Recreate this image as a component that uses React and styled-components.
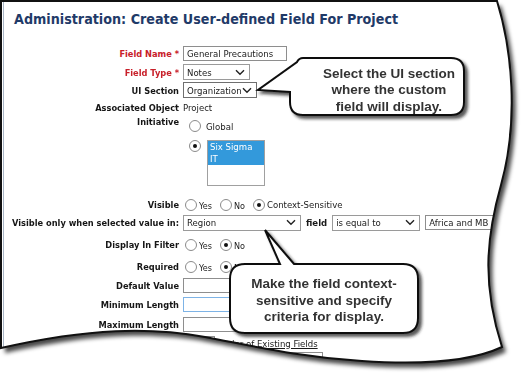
import React from "react";
import styled, { createGlobalStyle } from "styled-components";

const PAPER =
  "M1,1 L497,1 C512,50 519,120 501,185 C486,238 482,285 502,347 C470,362 420,365 362,361 C300,357 258,347 205,337 C150,327 90,328 1,348 Z";

const GlobalStyle = createGlobalStyle`
  html, body { margin: 0; padding: 0; background: #fff; }
  body { width: 530px; height: 381px; overflow: hidden; }
`;

const Chevron = () => (
  <svg width="10" height="7" viewBox="0 0 10 7">
    <polyline points="1,1.2 5,5.2 9,1.2" fill="none" stroke="#222" strokeWidth="1.4" />
  </svg>
);

const Radio = ({ checked }) => <RadioDot $checked={checked} />;

const Callout = ({ id, shape, box, children, ...pos }) => (
  <CalloutWrap style={pos}>
    <CalloutShape width={pos.width + 8} height={pos.height + 8}>
      <defs>
        <filter id={id} x="-10%" y="-10%" width="130%" height="140%">
          <feDropShadow dx="3" dy="3" stdDeviation="1.4" floodColor="#222" floodOpacity="0.75" />
        </filter>
      </defs>
      <path d={shape} fill="#fff" stroke="#111" strokeWidth="2" filter={`url(#${id})`} />
    </CalloutShape>
    <CalloutText $box={box}>{children}</CalloutText>
  </CalloutWrap>
);

export default function App() {
  return (
    <>
      <GlobalStyle />
      <Stage>
        <PaperShadow>
          <Paper>
            <Inner>
              <Title>Administration: Create User-defined Field For Project</Title>
              <Form>
                <Row $h={19}>
                  <Label $red>Field Name *</Label>
                  <Field>
                    <Input $w={104}>General Precautions</Input>
                  </Field>
                </Row>
                <Row $h={18}>
                  <Label $red>Field Type *</Label>
                  <Field>
                    <Select $w={67}>
                      Notes
                      <Chevron />
                    </Select>
                  </Field>
                </Row>
                <Row $h={18}>
                  <Label>UI Section</Label>
                  <Field>
                    <Select $w={74} $dark>
                      Organization
                      <Chevron />
                    </Select>
                  </Field>
                </Row>
                <Row $h={16}>
                  <Label>Associated Object</Label>
                  <Field>
                    <Plain>Project</Plain>
                  </Field>
                </Row>
                <Row $h={81} $top>
                  <Label $pad={1}>Initiative</Label>
                  <Stack>
                    <Choice $h={22}>
                      <Radio />
                      <Plain>Global</Plain>
                    </Choice>
                    <ListRow>
                      <Radio checked />
                      <ListBox>
                        <ListItem $sel>Six Sigma</ListItem>
                        <ListItem $sel>IT</ListItem>
                      </ListBox>
                    </ListRow>
                  </Stack>
                </Row>
                <Row $h={17}>
                  <Label>Visible</Label>
                  <Field>
                    <Radio />
                    <Small>Yes</Small>
                    <Radio />
                    <Small>No</Small>
                    <Radio checked />
                    <Plain>Context-Sensitive</Plain>
                  </Field>
                </Row>
                <Row $h={19}>
                  <Label>Visible only when selected value in:</Label>
                  <Field $gap={5}>
                    <Select $w={118}>
                      Region
                      <Chevron />
                    </Select>
                    <Bold>field</Bold>
                    <Select $w={88}>
                      is equal to
                      <Chevron />
                    </Select>
                    <Input $w={80}>Africa and MB</Input>
                  </Field>
                </Row>
                <Row $h={25}>
                  <Label>Display In Filter</Label>
                  <Field>
                    <Radio />
                    <Small>Yes</Small>
                    <Radio checked />
                    <Small>No</Small>
                  </Field>
                </Row>
                <Row $h={19}>
                  <Label>Required</Label>
                  <Field>
                    <Radio />
                    <Small>Yes</Small>
                    <Radio checked />
                    <Small>No</Small>
                  </Field>
                </Row>
                <Row $h={19}>
                  <Label>Default Value</Label>
                  <Field>
                    <Input $w={120} />
                  </Field>
                </Row>
                <Row $h={19}>
                  <Label>Minimum Length</Label>
                  <Field>
                    <Input $w={120} $focus />
                  </Field>
                </Row>
                <Row $h={20}>
                  <Label>Maximum Length</Label>
                  <Field>
                    <Input $w={120} />
                  </Field>
                </Row>
                <Row $h={18}>
                  <Label />
                  <Field>
                    <Input $w={32} />
                    <Link>Order of Existing Fields</Link>
                  </Field>
                </Row>
                <Row $h={16} $top>
                  <Label />
                  <Field>
                    <Input $w={36} $shift={104} />
                  </Field>
                </Row>
              </Form>
            </Inner>
          </Paper>
        </PaperShadow>
        <Edge width="530" height="381">
          <path d={PAPER} fill="none" stroke="#111" strokeWidth="2" />
        </Edge>
        <Callout
          id="tip-ui"
          left={254}
          top={54}
          width={214}
          height={64}
          box={{ l: 36, t: 3, w: 174, h: 58, pl: 24, pt: 9 }}
          shape="M49,4 L197,4 Q210,4 210,17 L210,48 Q210,61 197,61 L49,61 Q36,61 36,48 L36,38 L4,36 L43,8 Q45,4 49,4 Z"
        >
          Select the UI section
          <br />
          where the custom
          <br />
          field will display.
        </Callout>
        <Callout
          id="tip-ctx"
          left={226}
          top={226}
          width={196}
          height={110}
          box={{ l: 4, t: 38, w: 188, h: 69, pl: 0, pt: 5 }}
          shape="M19,38 L54,38 L39,4 L68,38 L177,38 Q192,38 192,53 L192,92 Q192,107 177,107 L19,107 Q4,107 4,92 L4,53 Q4,38 19,38 Z"
        >
          Make the field context-
          <br />
          sensitive and specify
          <br />
          criteria for display.
        </Callout>
      </Stage>
    </>
  );
}

const Stage = styled.div`
  position: relative;
  width: 530px;
  height: 381px;
  background: #fff;
  overflow: hidden;
`;

const PaperShadow = styled.div`
  width: 530px;
  height: 381px;
  filter: drop-shadow(4px 5px 2px rgba(0, 0, 0, 0.72));
`;

const Paper = styled.div`
  width: 530px;
  height: 381px;
  background: #fff;
  clip-path: path("${PAPER}");
  padding-left: 3px;
  box-sizing: border-box;
`;

const Inner = styled.div`
  height: 100%;
  border-left: 1px solid #a9b6c6;
  padding-top: 9px;
  font-family: "DejaVu Sans Condensed", "DejaVu Sans", sans-serif;
  font-stretch: condensed;
  font-size: 9.5px;
  color: #1a1a1a;
`;

const Title = styled.h1`
  margin: 0 0 0 10px;
  font-size: 14.2px;
  line-height: 20px;
  font-weight: bold;
  color: #1f3a68;
  white-space: nowrap;
`;

const Form = styled.div`
  margin-top: 15px;
  display: flex;
  flex-direction: column;
`;

const Row = styled.div`
  display: grid;
  grid-template-columns: 175px 1fr;
  column-gap: 4px;
  height: ${(p) => p.$h}px;
  align-items: ${(p) => (p.$top ? "start" : "center")};
`;

const Label = styled.div`
  text-align: right;
  font-size: 9.2px;
  font-weight: bold;
  white-space: nowrap;
  color: ${(p) => (p.$red ? "#c8202a" : "#161616")};
  padding-top: ${(p) => p.$pad || 0}px;
`;

const Field = styled.div`
  display: flex;
  align-items: center;
  gap: ${(p) => p.$gap || 2}px;
  white-space: nowrap;
`;

const Stack = styled.div`
  display: flex;
  flex-direction: column;
  padding-left: 4px;
`;

const Choice = styled.div`
  display: flex;
  align-items: center;
  gap: 5px;
  height: ${(p) => p.$h}px;
`;

const ListRow = styled.div`
  display: flex;
  align-items: flex-start;
  gap: 6px;
  margin-top: 3px;
`;

const ListBox = styled.div`
  width: 58px;
  height: 46px;
  box-sizing: border-box;
  border: 1px solid #a0a0a0;
  background: #fff;
`;

const ListItem = styled.div`
  line-height: 12px;
  padding-left: 2px;
  color: ${(p) => (p.$sel ? "#fff" : "#111")};
  background: ${(p) => (p.$sel ? "#3399db" : "transparent")};
`;

const RadioDot = styled.span`
  width: 10px;
  height: 10px;
  flex: none;
  border: 1px solid #8a8a8a;
  border-radius: 50%;
  background: #fff;
  display: inline-flex;
  align-items: center;
  justify-content: center;
  margin-left: 2px;
  &::after {
    content: "";
    width: 4px;
    height: 4px;
    border-radius: 50%;
    background: ${(p) => (p.$checked ? "#111" : "transparent")};
  }
`;

const Plain = styled.span`
  color: #1a1a1a;
  margin-right: 4px;
`;

const Small = styled.span`
  font-size: 9px;
  padding-top: 2px;
  color: #1a1a1a;
  margin-right: 4px;
`;

const Bold = styled.span`
  font-weight: bold;
`;

const Input = styled.div`
  width: ${(p) => p.$w}px;
  height: 15px;
  box-sizing: border-box;
  margin-left: ${(p) => p.$shift || 0}px;
  border: 1px solid ${(p) => (p.$focus ? "#7db3e6" : "#8e8e8e")};
  background: #fff;
  line-height: 13px;
  padding-left: 3px;
  overflow: hidden;
  flex: none;
`;

const Select = styled.div`
  width: ${(p) => p.$w}px;
  height: 16px;
  box-sizing: border-box;
  border: 1px solid ${(p) => (p.$dark ? "#6f6f6f" : "#9a9a9a")};
  background: #fff;
  display: flex;
  align-items: center;
  justify-content: space-between;
  padding: 0 4px 0 3px;
  flex: none;
`;

const Link = styled.span`
  text-decoration: underline;
  color: #1a1a1a;
  margin-left: 2px;
`;

const Edge = styled.svg`
  position: absolute;
  left: 0;
  top: 0;
  pointer-events: none;
`;

const CalloutWrap = styled.div`
  position: absolute;
`;

const CalloutShape = styled.svg`
  position: absolute;
  left: 0;
  top: 0;
`;

const CalloutText = styled.div`
  position: absolute;
  left: ${(p) => p.$box.l}px;
  top: ${(p) => p.$box.t}px;
  width: ${(p) => p.$box.w}px;
  height: ${(p) => p.$box.h}px;
  box-sizing: border-box;
  padding-left: ${(p) => p.$box.pl}px;
  padding-top: ${(p) => p.$box.pt}px;
  display: flex;
  align-items: center;
  justify-content: center;
  text-align: center;
  font-family: "Liberation Sans", Arial, sans-serif;
  font-weight: bold;
  font-size: 13.5px;
  line-height: 16.5px;
  color: #333;
`;
